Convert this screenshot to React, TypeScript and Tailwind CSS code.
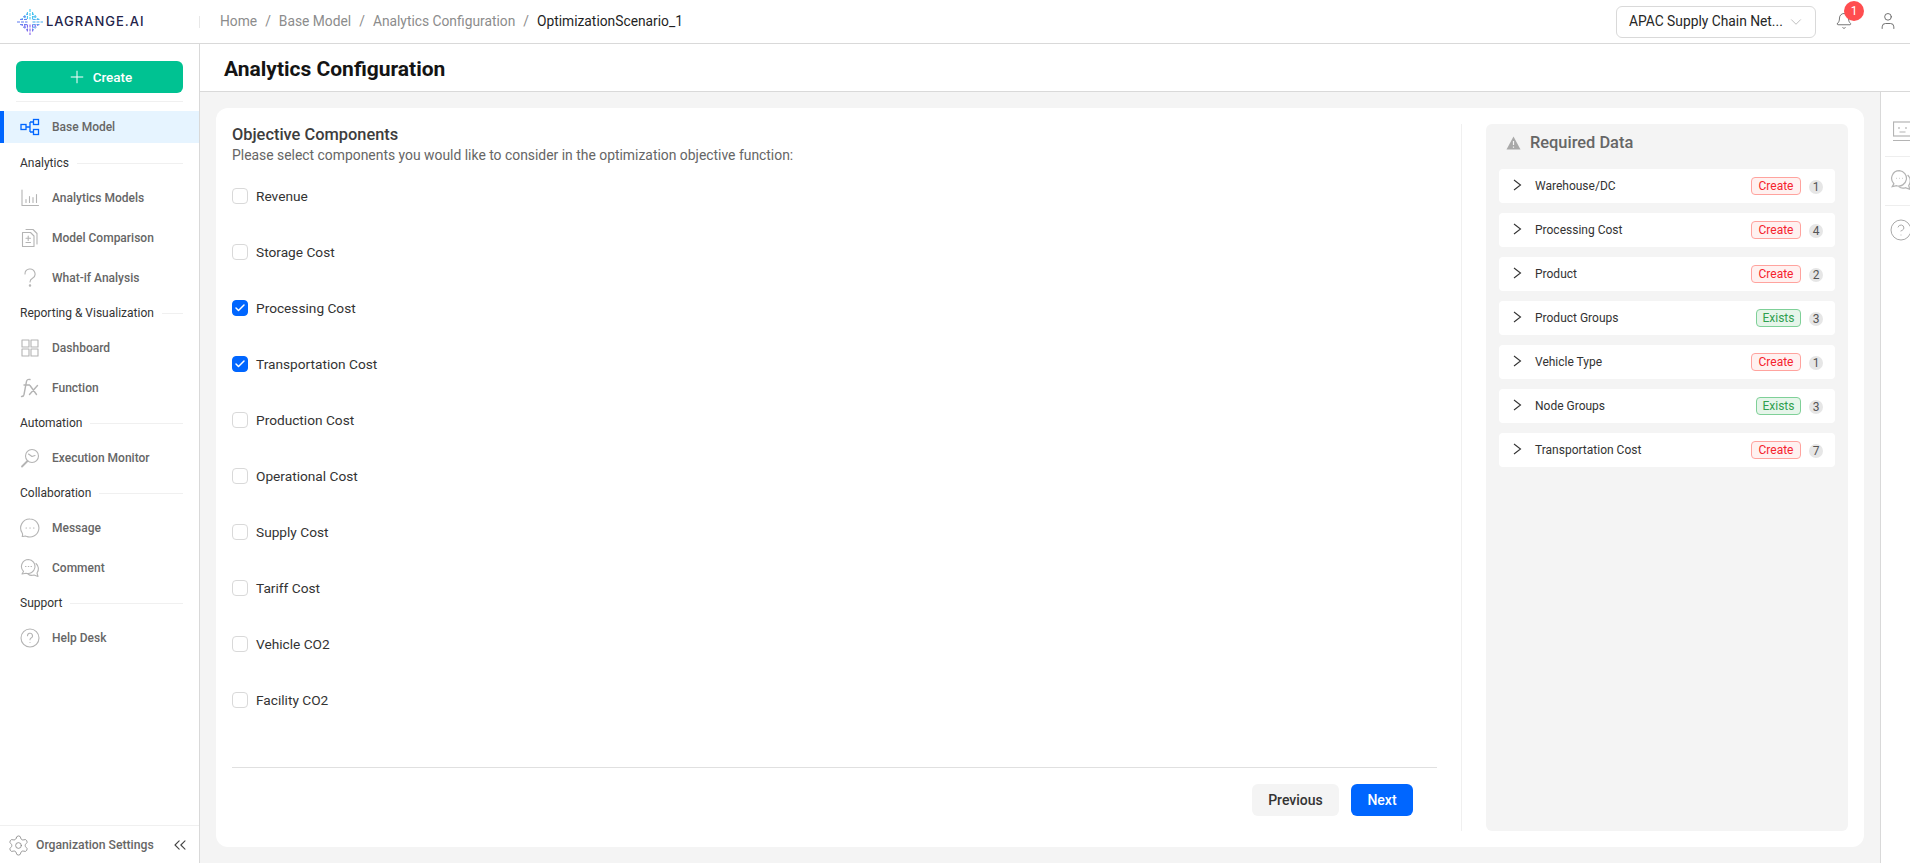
import React from "react";
import { Plus, ChevronDown, Bell, User, Check, Settings, ChevronsLeft, CircleHelp } from "lucide-react";

const font = { fontFamily: 'Roboto, "Noto Sans", sans-serif' };

function Logo() {
  const rays: React.ReactNode[] = [];
  for (let i = -3; i <= 3; i++) {
    const l = 13 - Math.abs(i) * 3;
    const x = 14 + i * 2.6;
    rays.push(<line key={"vt" + i} x1={x} y1={14 - l} x2={x} y2={11.500} stroke="#35c3ee" strokeWidth="1" strokeDasharray="3 1" />);
    rays.push(<line key={"vb" + i} x1={x} y1={16.500} x2={x} y2={14 + l} stroke="#7a55ea" strokeWidth="1" strokeDasharray="3 1" />);
    rays.push(<line key={"hl" + i} x1={14 - l} y1={x} x2={11.500} y2={x} stroke="#5a78f0" strokeWidth="1" strokeDasharray="3 1" />);
    rays.push(<line key={"hr" + i} x1={16.500} y1={x} x2={14 + l} y2={x} stroke="#45a8ee" strokeWidth="1" strokeDasharray="3 1" />);
  }
  return (
    <svg width="28" height="28" viewBox="0 0 28 28" className="shrink-0">
      {rays}
    </svg>
  );
}

function Icon({ children }: { children: React.ReactNode }) {
  return (
    <svg width="20" height="20" viewBox="0 0 20 20" fill="none" stroke="#b4b4b4" strokeWidth="1.1" strokeLinecap="round" strokeLinejoin="round" className="shrink-0">
      {children}
    </svg>
  );
}

const BaseIcon = (
  <svg width="20" height="20" viewBox="0 0 20 20" fill="none" stroke="#0066ff" strokeWidth="1.3" className="shrink-0">
    <rect x="1" y="7.500" width="5" height="5" />
    <rect x="13.500" y="2.500" width="5" height="5" />
    <rect x="13.500" y="12.500" width="5" height="5" />
    <path d="M6 10h4M10 5v10M10 5h3.500M10 15h3.500" />
  </svg>
);
const ChartIcon = (
  <Icon>
    <path d="M2 2v15.500h16.500M6 14.500v-3M9.500 14.500v-6M13 14.500v-5M16.500 14.500v-8" />
  </Icon>
);
const CompareIcon = (
  <Icon>
    <path d="M2.500 4.500h8l3.500 3.500v10.500H2.500zM6 1.500h7l4 4v10.500" />
    <path d="M8.200 8v4.500M6 10.200h4.500M6 14.500h4.500" />
  </Icon>
);
const WhatIf = (
  <Icon>
    <path d="M5 6a5 5 0 1 1 7.500 4.300c-1.600.9-2.500 1.700-2.500 3.700" />
    <circle cx="10" cy="17.500" r=".7" />
  </Icon>
);
const DashIcon = (
  <Icon>
    <rect x="2" y="2" width="7" height="7" />
    <rect x="11" y="2" width="7" height="7" />
    <rect x="2" y="11" width="7" height="7" />
    <rect x="11" y="11" width="7" height="7" />
  </Icon>
);
const FxIcon = (
  <svg width="20" height="20" viewBox="0 0 20 20" fill="none" stroke="#b4b4b4" strokeWidth="1.4" strokeLinecap="round" className="shrink-0">
    <path d="M10 1.500c-2.200-.5-3.200.5-3.600 2.300L4 16.500c-.4 1.700-1.200 2.200-2.500 2M4 7h5.500M10 7.500l6.500 9M17.500 7.500l-8 9" />
  </svg>
);
const ExecIcon = (
  <Icon>
    <circle cx="12" cy="8" r="6.500" />
    <path d="M7.500 13L2 18.500" strokeWidth="1.800" />
    <path d="M8.500 6l3.500 2.500 3-1" />
  </Icon>
);
const MsgIcon = (
  <Icon>
    <path d="M10 1a9 9 0 1 1-3.800 17.200c-.8-.4-2.500.3-4 .3.400-1 .5-2.500 0-3.500A9 9 0 0 1 10 1z" />
    <path d="M6 10h.5M9.800 10h.5M13.500 10h.5" />
  </Icon>
);
const chatPaths = (
  <>
    <path d="M8.500 1.500a7 7 0 0 0-5 11.900l-1.500 2.600 4-.8a7 7 0 1 0 2.500-13.700z" />
    <path d="M16 5.500a7 7 0 0 1 1 9.500l1 3.500-4-1.500c-2 .7-4.500.3-6-1" />
    <path d="M5.500 8.500h.5M8.300 8.500h.5M11 8.500h.5" />
  </>
);
const CommentIcon = <Icon>{chatPaths}</Icon>;
const HelpIcon = (
  <Icon>
    <circle cx="10" cy="10" r="9" />
    <path d="M7.500 7.800a2.500 2.500 0 1 1 3.600 2.200c-.8.400-1.100.9-1.100 1.700" />
    <path d="M10 14.500h.01" />
  </Icon>
);

function NavItem({ icon, label }: { icon: React.ReactNode; label: string }) {
  return (
    <div className="flex h-10 items-center gap-[12px] pl-5 text-[12px] font-medium text-[#666666]">
      <span className="flex w-5 justify-center">{icon}</span>
      <span>{label}</span>
    </div>
  );
}

function NavHead({ label }: { label: string }) {
  return (
    <div className="flex h-[30px] items-center gap-2 pl-5 pr-4 text-[12px] text-[#333333]">
      <span className="whitespace-nowrap">{label}</span>
      <span className="h-px flex-1 bg-[#f0f0f0]" />
    </div>
  );
}

function Sidebar() {
  return (
    <aside className="flex w-[200px] shrink-0 flex-col border-r border-[#d9d9d9] bg-white">
      <div className="mx-4 mt-[17px] border-b border-[#f0f0f0] pb-2">
        <button className="flex h-8 w-full items-center justify-center gap-[6px] rounded-md bg-[#00c292] text-[13.5px] font-medium text-white">
          <Plus size={20} strokeWidth={1.2} />
          Create
        </button>
      </div>
      <div className="mt-[9px] mb-[5px] flex h-8 items-center gap-[12px] border-l-4 border-[#0066ff] bg-[#e6f4ff] pl-4 text-[12px] font-medium text-[#666666]">
        <span className="flex w-5 justify-center">{BaseIcon}</span>
        <span>Base Model</span>
      </div>
      <NavHead label="Analytics" />
      <NavItem icon={ChartIcon} label="Analytics Models" />
      <NavItem icon={CompareIcon} label="Model Comparison" />
      <NavItem icon={WhatIf} label="What-if Analysis" />
      <NavHead label="Reporting & Visualization" />
      <NavItem icon={DashIcon} label="Dashboard" />
      <NavItem icon={FxIcon} label="Function" />
      <NavHead label="Automation" />
      <NavItem icon={ExecIcon} label="Execution Monitor" />
      <NavHead label="Collaboration" />
      <NavItem icon={MsgIcon} label="Message" />
      <NavItem icon={CommentIcon} label="Comment" />
      <NavHead label="Support" />
      <NavItem icon={HelpIcon} label="Help Desk" />
      <div className="mt-auto flex h-[38px] items-center gap-[6px] border-t border-[#f0f0f0] pl-[7px] pr-[9px] pt-[1px] text-[12.200px] font-medium text-[#666666]">
        <Settings size={23} strokeWidth={0.9} color="#8c8c8c" />
        <span className="flex-1 whitespace-nowrap">Organization Settings</span>
        <ChevronsLeft size={20} strokeWidth={1.3} color="#444444" />
      </div>
    </aside>
  );
}

const comps: [string, boolean][] = [
  ["Revenue", false],
  ["Storage Cost", false],
  ["Processing Cost", true],
  ["Transportation Cost", true],
  ["Production Cost", false],
  ["Operational Cost", false],
  ["Supply Cost", false],
  ["Tariff Cost", false],
  ["Vehicle CO2", false],
  ["Facility CO2", false],
];

const required: [string, string, number][] = [
  ["Warehouse/DC", "Create", 1],
  ["Processing Cost", "Create", 4],
  ["Product", "Create", 2],
  ["Product Groups", "Exists", 3],
  ["Vehicle Type", "Create", 1],
  ["Node Groups", "Exists", 3],
  ["Transportation Cost", "Create", 7],
];

function Badge({ kind }: { kind: string }) {
  const cls =
    kind === "Create"
      ? "w-[50px] border-[#ffa39e] bg-[#fff1f0] text-[#f5222d]"
      : "w-[45px] border-[#7fd098] bg-[#e6f5ea] text-[#2fa04f]";
  return (
    <span className={"flex h-[18px] items-center justify-center rounded-[4px] border text-[12px] leading-none " + cls}>{kind}</span>
  );
}

export default function App() {
  return (
    <div className="flex h-[863px] w-[1910px] flex-col overflow-hidden bg-[#f4f4f4]" style={font}>
      <header className="flex h-[44px] shrink-0 items-center border-b border-[#d9d9d9] bg-white">
        <div className="flex h-full w-[200px] shrink-0 items-center pl-[16px]">
          <Logo />
          <span className="ml-[2px] text-[13px] font-medium tracking-[1px] text-[#23234a]" style={{ fontFamily: '"Inter", sans-serif' }}>LAGRANGE.AI</span>
          <span className="ml-auto h-3 w-px bg-[#e8e8e8]" />
        </div>
        <nav className="ml-5 flex items-center gap-[8px] text-[13.800px] text-[#8c8c8c]">
          <span>Home</span>
          <span>/</span>
          <span>Base Model</span>
          <span>/</span>
          <span>Analytics Configuration</span>
          <span>/</span>
          <span className="text-[#1f1f1f]">OptimizationScenario_1</span>
        </nav>
        <div className="ml-auto flex h-[32px] w-[200px] items-center rounded-md border border-[#d9d9d9] pl-3 pr-[10px] text-[13.800px] text-[#262626]">
          <span className="flex-1 whitespace-nowrap">APAC Supply Chain Net...</span>
          <ChevronDown size={18} strokeWidth={0.9} color="#a0a0a0" className="ml-1 shrink-0" />
        </div>
        <div className="relative ml-[18px] flex w-5 justify-center">
          <Bell size={18} strokeWidth={1.2} color="#666666" className="-mt-[2px]" />
          <span className="absolute -right-[10px] -top-[13px] flex h-5 w-5 items-center justify-center rounded-full bg-[#ff4d4f] text-[12px] text-white">1</span>
        </div>
        <div className="ml-[24px] mr-[12px] flex w-5 justify-center">
          <User size={22} strokeWidth={1.1} color="#666666" className="-mt-[2px]" />
        </div>
      </header>
      <div className="flex min-h-0 flex-1">
        <Sidebar />
        <div className="flex min-w-0 flex-1 flex-col">
          <div className="flex h-[48px] shrink-0 items-center border-b border-[#d9d9d9] bg-white pl-6 pt-[5px] text-[21px] font-bold text-[#141414]">
            Analytics Configuration
          </div>
          <div className="flex min-h-0 flex-1">
            <main className="min-w-0 flex-1 p-4">
              <div className="flex h-full rounded-xl bg-white p-4">
                <section className="flex w-[1230px] shrink-0 flex-col border-r border-[#f0f0f0] pr-[24px]">
                  <h2 className="pt-[1px] text-[16.400px] font-medium leading-5 text-[#3d3d3d]">Objective Components</h2>
                  <p className="pt-[1px] text-[13.900px] leading-[18px] text-[#666666]">Please select components you would like to consider in the optimization objective function:</p>
                  <div className="mt-[4px] flex flex-col">
                    {comps.map(([c, on]) => (
                      <label key={c} className="flex h-14 items-center gap-2 text-[13.700px] text-[#333333]">
                        <span className={"flex h-4 w-4 items-center justify-center rounded-[4px] border " + (on ? "border-[#0066ff] bg-[#0066ff]" : "border-[#d9d9d9] bg-white")}>
                          {on && <Check size={12} strokeWidth={3} color="#ffffff" />}
                        </span>
                        {c}
                      </label>
                    ))}
                  </div>
                  <div className="mt-auto flex h-[64px] items-start justify-end gap-[12px] border-t border-[#e0e0e0] pr-[24px] pt-[16px]">
                    <button className="flex h-8 w-[87px] items-center justify-center rounded-md bg-[#f4f4f4] text-[14px] font-medium text-[#333333]">Previous</button>
                    <button className="flex h-8 w-[62px] items-center justify-center rounded-md bg-[#0066ff] text-[14px] font-medium text-white">Next</button>
                  </div>
                </section>
                <aside className="ml-[24px] flex min-w-0 flex-1 flex-col rounded-md bg-[#f4f4f4] px-[13px]">
                  <div className="flex h-[45px] shrink-0 items-center gap-[9px] pb-[7px] pl-[7px] text-[16.400px] font-medium text-[#666666]">
                    <svg width="15" height="14" viewBox="0 0 15 14" className="shrink-0">
                      <path d="M7.500 0.500L14.500 13.500H0.500Z" fill="#a9a9a9" />
                      <path d="M7.500 5v4M7.500 10.500v1.200" stroke="#f4f4f4" strokeWidth="1.200" />
                    </svg>
                    Required Data
                  </div>
                  <div className="flex flex-col gap-[10px]">
                    {required.map(([name, kind, n]) => (
                      <div key={name} className="flex h-[34px] items-center rounded-[4px] bg-white pl-[14px] pr-[12px] text-[12px] text-[#333333]">
                        <svg width="9" height="12" viewBox="0 0 9 12" fill="none" stroke="#333333" strokeWidth="1.100" className="-mt-[2px] shrink-0">
                          <path d="M1 1l6.500 5L1 11" />
                        </svg>
                        <span className="ml-[13px] flex-1">{name}</span>
                        <Badge kind={kind} />
                        <span className="ml-[8px] mt-[1px] flex h-[14px] w-[14px] items-center justify-center rounded-full bg-[#e6e6e6] text-[12px] text-[#555555]">{n}</span>
                      </div>
                    ))}
                  </div>
                </aside>
              </div>
            </main>
            <aside className="flex w-[30px] shrink-0 flex-col overflow-hidden border-l border-[#d9d9d9] bg-white">
              <div className="ml-[4px] flex h-[65px] items-end border-b border-[#eeeeee] pb-[13px] pl-[8px]">
                <svg width="24" height="22" viewBox="0 0 24 22" fill="none" stroke="#b4b4b4" strokeWidth="1.2" className="shrink-0">
                  <rect x="0.500" y="1" width="18" height="14" />
                  <path d="M0 19.500h20M6 6v2M13 6v2M6.500 11h6" />
                </svg>
              </div>
              <div className="ml-[4px] flex h-[49px] items-center border-b border-[#eeeeee] pb-[2px] pl-[5px]">
                <svg width="22" height="22" viewBox="0 0 20 20" fill="none" stroke="#b4b4b4" strokeWidth="1.1" className="shrink-0">
                  {chatPaths}
                </svg>
              </div>
              <div className="ml-[4px] flex h-[49px] items-center pb-[2px] pl-[4px]">
                <CircleHelp size={24} strokeWidth={1} color="#a9a9a9" className="shrink-0" />
              </div>
            </aside>
          </div>
        </div>
      </div>
    </div>
  );
}
